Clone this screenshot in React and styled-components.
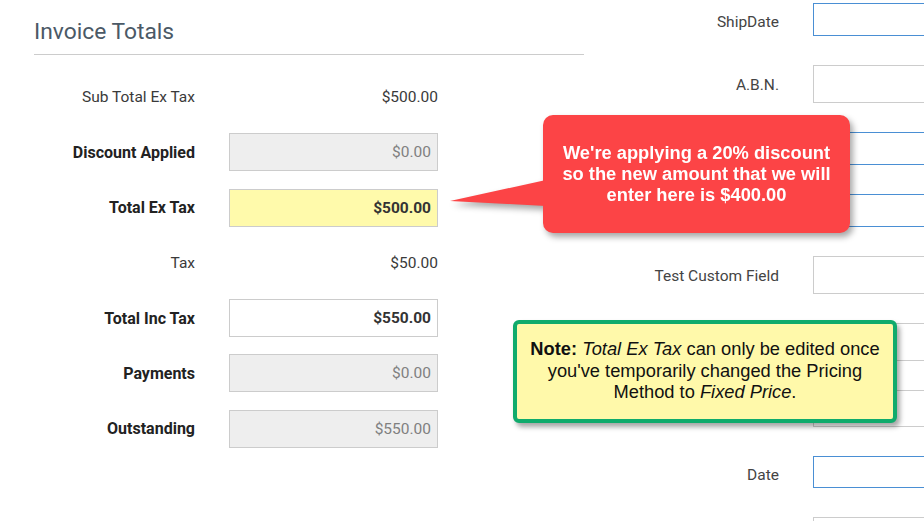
import React from "react";
import styled, { createGlobalStyle } from "styled-components";

const GlobalStyle = createGlobalStyle`
  html, body {
    margin: 0;
    padding: 0;
    background: #ffffff;
    overflow: hidden;
  }
  body {
    font-family: Roboto, "Liberation Sans", Arial, sans-serif;
  }
`;

const Page = styled.div`
  position: relative;
  width: 924px;
  height: 521px;
  overflow: hidden;
  display: flex;
  padding-left: 34px;
  box-sizing: border-box;
  background: #fff;
`;

const TotalsPanel = styled.section`
  width: 550px;
  flex-shrink: 0;
`;

const Heading = styled.h2`
  margin: 0;
  padding: 18px 0 8px;
  font-size: 22.8px;
  line-height: 28px;
  font-weight: 400;
  color: #4b5966;
  border-bottom: 1px solid #cccccc;
`;

const Rows = styled.div`
  display: flex;
  flex-direction: column;
  gap: 17.3px;
  margin-top: 23px;
`;

const Row = styled.div`
  display: grid;
  grid-template-columns: 161px 209px;
  column-gap: 34px;
  align-items: center;
  height: 38px;
`;

const Label = styled.div`
  text-align: right;
  font-size: ${(p) => (p.$bold ? 16 : 15.5)}px;
  color: ${(p) => (p.$bold ? "#222" : "#3a3a3a")};
  font-weight: ${(p) => (p.$bold ? 700 : 400)};
`;

const StaticValue = styled.div`
  text-align: right;
  font-size: 15.5px;
  color: #3a3a3a;
`;

const ValueBox = styled.div`
  box-sizing: border-box;
  height: 38px;
  display: flex;
  align-items: center;
  justify-content: flex-end;
  padding-right: 6px;
  font-size: 15.5px;
  border: 1px solid #cccccc;
  background: ${(p) =>
    p.$variant === "readonly" ? "#eeeeee" : p.$variant === "highlight" ? "#fffaab" : "#ffffff"};
  color: ${(p) => (p.$variant === "readonly" ? "#808080" : "#333")};
  font-weight: ${(p) => (p.$variant === "readonly" ? 400 : 700)};
`;

const SidePanel = styled.section`
  display: flex;
  flex-direction: column;
  gap: 29px;
  padding-top: 3px;
  flex-shrink: 0;
`;

const SideRow = styled.div`
  display: grid;
  grid-template-columns: 195px 260px;
  column-gap: 34px;
  align-items: center;
`;

const SideLabel = styled.div`
  text-align: right;
  padding-top: ${(p) => (p.$focus ? 5 : 1)}px;
  font-size: 15.5px;
  color: #444;
`;

const SideInput = styled.div`
  box-sizing: border-box;
  height: ${(p) => p.$h}px;
  border: 1px solid ${(p) => (p.$focus ? "#4a8fd4" : "#cccccc")};
  background: #fff;
`;

const Callout = styled.div`
  position: absolute;
  left: 543px;
  top: 115px;
  width: 307px;
  height: 118px;
  filter: drop-shadow(3px 4px 3px rgba(0, 0, 0, 0.35));
`;

const CalloutBody = styled.div`
  position: relative;
  width: 100%;
  height: 100%;
  box-sizing: border-box;
  border-radius: 10px;
  background: #fc4446;
  display: flex;
  align-items: center;
  justify-content: center;
  text-align: center;
  padding: 0 6px 2px;
  font-family: "Liberation Sans", Arial, sans-serif;
  font-weight: 700;
  font-size: 18.3px;
  line-height: 21px;
  color: #ffffff;
  white-space: nowrap;
`;

const Pointer = styled.svg`
  position: absolute;
  left: -93px;
  top: 65px;
`;

const Note = styled.div`
  position: absolute;
  left: 513px;
  top: 320px;
  width: 384px;
  height: 103px;
  box-sizing: border-box;
  border: 4px solid #10ab6c;
  border-radius: 6px;
  background: #fff9aa;
  box-shadow: 3px 4px 5px rgba(0, 0, 0, 0.35);
  display: flex;
  align-items: center;
  justify-content: center;
  text-align: center;
  padding: 0 4px 2px;
  font-family: "Liberation Sans", Arial, sans-serif;
  font-size: 18.3px;
  line-height: 21.5px;
  color: #111;
  white-space: nowrap;
`;

const totals = [
  { label: "Sub Total Ex Tax", value: "$500.00" },
  { label: "Discount Applied", value: "$0.00", bold: true, variant: "readonly" },
  { label: "Total Ex Tax", value: "$500.00", bold: true, variant: "highlight" },
  { label: "Tax", value: "$50.00" },
  { label: "Total Inc Tax", value: "$550.00", bold: true, variant: "plain" },
  { label: "Payments", value: "$0.00", bold: true, variant: "readonly" },
  { label: "Outstanding", value: "$550.00", bold: true, variant: "readonly" },
];

// rows hidden behind the callouts carry no visible label
const sideFields = [
  { id: "ship", label: "ShipDate", h: 33, focus: true },
  { id: "abn", label: "A.B.N.", h: 38 },
  { id: "f3", label: "", h: 33, focus: true },
  { id: "f4", label: "", h: 33, focus: true },
  { id: "custom", label: "Test Custom Field", h: 38 },
  { id: "f6", label: "", h: 38 },
  { id: "f7", label: "", h: 37 },
  { id: "date", label: "Date", h: 32, focus: true },
  { id: "f9", label: "", h: 38 },
];

export default function App() {
  return (
    <>
      <GlobalStyle />
      <Page>
        <TotalsPanel>
          <Heading>Invoice Totals</Heading>
          <Rows>
            {totals.map((t) => (
              <Row key={t.label}>
                <Label $bold={t.bold}>{t.label}</Label>
                {t.variant ? (
                  <ValueBox $variant={t.variant}>{t.value}</ValueBox>
                ) : (
                  <StaticValue>{t.value}</StaticValue>
                )}
              </Row>
            ))}
          </Rows>
        </TotalsPanel>

        <SidePanel>
          {sideFields.map((f) => (
            <SideRow key={f.id}>
              <SideLabel $focus={f.focus}>{f.label}</SideLabel>
              <SideInput $h={f.h} $focus={f.focus} />
            </SideRow>
          ))}
        </SidePanel>

        <Callout>
          <CalloutBody>
            <Pointer width="96" height="28" viewBox="0 0 96 28">
              <polygon points="0,21 96,0 96,26" fill="#fc4446" />
            </Pointer>
            <div>
              We're applying a 20% discount
              <br />
              so the new amount that we will
              <br />
              enter here is $400.00
            </div>
          </CalloutBody>
        </Callout>

        <Note>
          <div>
            <b>Note:</b> <i>Total Ex Tax</i> can only be edited once
            <br />
            you've temporarily changed the Pricing
            <br />
            Method to <i>Fixed Price</i>.
          </div>
        </Note>
      </Page>
    </>
  );
}
